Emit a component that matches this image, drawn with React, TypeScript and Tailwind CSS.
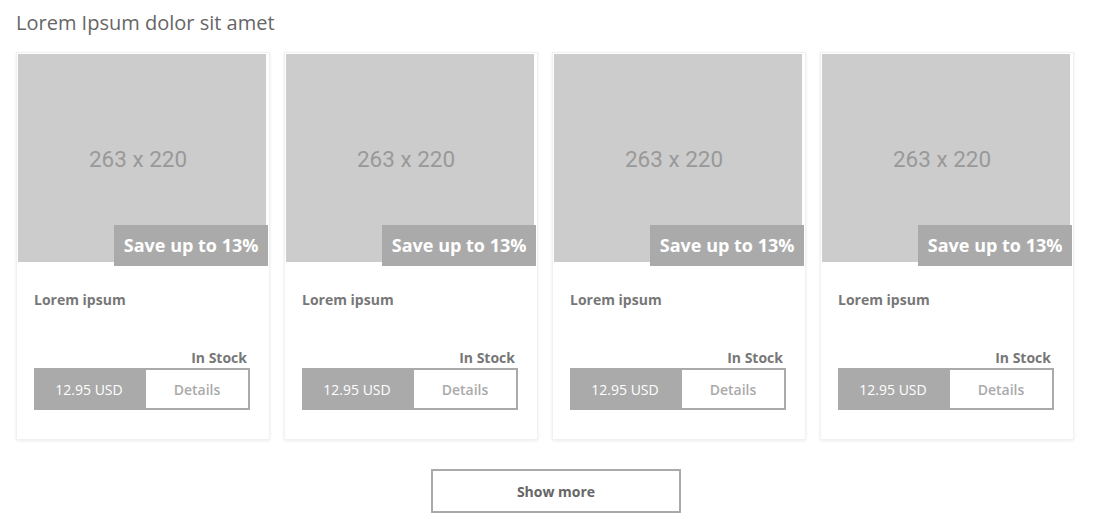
const products = [1, 2, 3, 4];

function ProductCard() {
  return (
    <div className="w-[254px] bg-white border border-[#f1f1f1] p-[1px] shadow-[0_1px_3px_rgba(0,0,0,0.08)]">
      <div className="relative w-[248px] h-[208px] bg-[#cccccc] flex items-center justify-center pr-[8px]">
        <span className="text-[22.5px] text-[#999999] font-['Roboto',sans-serif] mt-[3px]">263 x 220</span>
        <div className="absolute right-[-2px] bottom-[-4px] bg-[#aaaaaa] px-[9.5px] h-[41px] flex items-center text-white text-[18px] font-bold">
          Save up to 13%
        </div>
      </div>
      <div className="pl-[16px] pr-[18px] pt-[29px] pb-[28px]">
        <div className="text-[14px] font-bold text-[#777777] leading-[18px]">Lorem ipsum</div>
        <div className="mt-[40px] text-right pr-[3px] text-[14px] font-bold text-[#777777] leading-[18px]">In Stock</div>
        <div className="flex h-[42px] mt-[1px]">
          <div className="w-[110px] bg-[#aaaaaa] text-white text-[14px] flex items-center justify-center">12.95 USD</div>
          <div className="flex-1 border-2 border-[#aaaaaa] text-[#aaaaaa] text-[14px] font-semibold flex items-center justify-center">Details</div>
        </div>
      </div>
    </div>
  );
}

export default function App() {
  return (
    <div className="w-[1101px] h-[528px] bg-white font-['Open_Sans',sans-serif] px-[16px] pt-[9px] overflow-hidden">
      <h2 className="text-[20px] text-[#666666] leading-[28px]">Lorem Ipsum dolor sit amet</h2>
      <div className="flex gap-[14px] mt-[15px]">
        {products.map((p) => (
          <ProductCard key={p} />
        ))}
      </div>
      <div className="mt-[29px] ml-[415px]">
        <button className="w-[250px] h-[44px] border-2 border-[#aaaaaa] bg-white text-[14px] font-bold text-[#666666]">
          Show more
        </button>
      </div>
    </div>
  );
}
